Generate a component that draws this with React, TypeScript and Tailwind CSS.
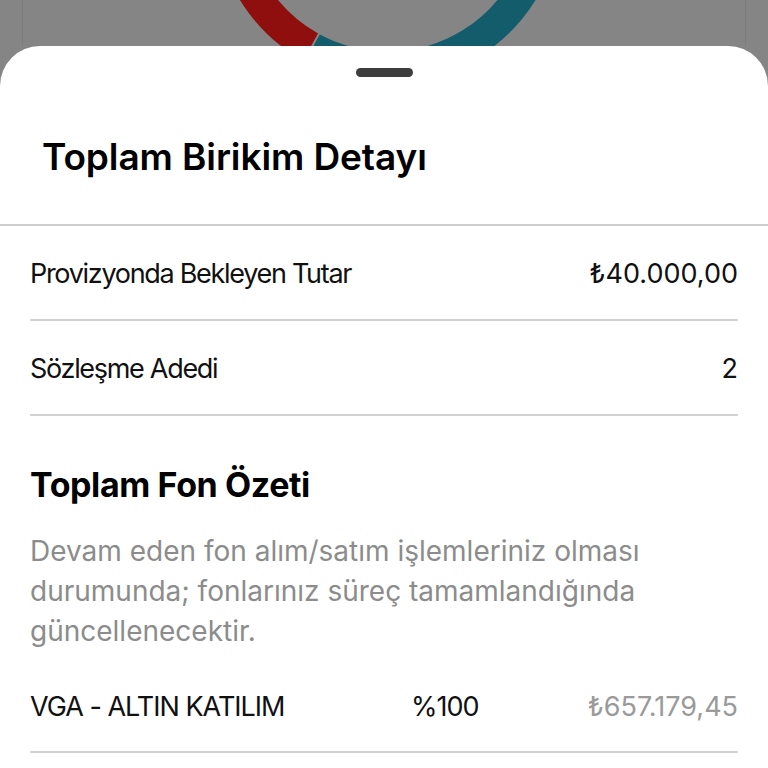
import React from 'react';

const rows = [
  { label: 'Provizyonda Bekleyen Tutar', value: '₺40.000,00' },
  { label: 'Sözleşme Adedi', value: '2' },
];

const Donut = () => (
  <svg width="768" height="46" viewBox="0 0 768 46" className="block">
    <path d="M516.7 -206 A168 168 0 0 1 307.8 49.6" fill="none" stroke="#135c6c" strokeWidth="33" />
    <path d="M305.8 48.5 A168 168 0 0 1 259.3 -206" fill="none" stroke="#8e0f0d" strokeWidth="33" />
  </svg>
);

const App = () => {
  return (
    <div
      className="w-[768px] h-[768px] overflow-hidden bg-[#858585] flex flex-col"
      style={{ fontFamily: 'Inter, "Noto Sans", sans-serif' }}
    >
      {/* chart peeking out behind the sheet */}
      <div className="h-[46px] shrink-0 mx-[22px] border-x border-[#7c7c7c] flex justify-center overflow-hidden">
        <Donut />
      </div>

      <div className="flex-1 bg-white rounded-t-[40px] flex flex-col">
        <div className="pt-[22px] flex justify-center">
          <div className="w-[57px] h-[9px] rounded-full bg-[#3d3d3d]" />
        </div>

        <h1 className="mt-[60px] pl-[42px] text-[37px] leading-[40px] font-semibold text-black tracking-[-0.1px]">
          Toplam Birikim Detayı
        </h1>

        <div className="mt-[47px] h-[2px] bg-[#cfcfcf]" />

        <div className="px-[30px] flex flex-col">
          {rows.map((r) => (
            <React.Fragment key={r.label}>
              <div className="h-[93px] pt-[4px] flex items-center justify-between text-[27px] text-[#111]">
                <span className="tracking-[-1.3px]">{r.label}</span>
                <span>{r.value}</span>
              </div>
              <div className="h-[2px] bg-[#d2d2d2]" />
            </React.Fragment>
          ))}

          <h2 className="mt-[49px] text-[34px] leading-[40px] font-bold text-black tracking-[-0.4px]">
            Toplam Fon Özeti
          </h2>

          <p className="mt-[26px] w-[690px] text-[28px] leading-[40px] text-[#8c8c8c]">
            Devam eden fon alım/satım işlemleriniz olması durumunda; fonlarınız süreç tamamlandığında güncellenecektir.
          </p>

          <div className="h-[100px] pt-[12px] grid grid-cols-[381px_1fr_auto] items-center text-[27px]">
            <span className="text-[#111] tracking-[-1px]">VGA - ALTIN KATILIM</span>
            <span className="text-[#111] tracking-[-1px]">%100</span>
            <span className="text-[#9a9a9a]">₺657.179,45</span>
          </div>
          <div className="h-[2px] bg-[#d2d2d2]" />
        </div>
      </div>
    </div>
  );
};

export default App;
